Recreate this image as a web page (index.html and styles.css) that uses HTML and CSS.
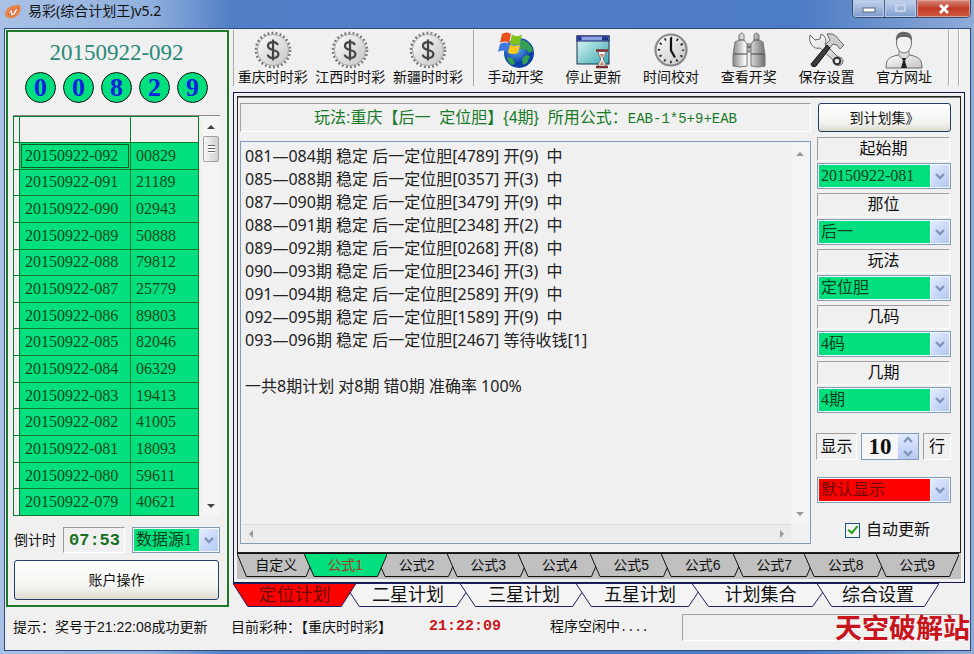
FILE: index.html
```html
<!DOCTYPE html>
<html lang="zh-CN">
<head>
<meta charset="utf-8">
<title>易彩(综合计划王)v5.2</title>
<link rel="stylesheet" href="styles.css">
</head>
<body>
<svg class="defs" aria-hidden="true">
  <defs>
    <linearGradient id="metal" x1="0" y1="0" x2="1" y2="1"><stop offset="0" stop-color="#fdfdfd"/><stop offset="1" stop-color="#c4c4c4"/></linearGradient>
    <linearGradient id="barrel"><stop offset="0" stop-color="#888"/><stop offset=".4" stop-color="#fff"/><stop offset="1" stop-color="#707070"/></linearGradient>
    <linearGradient id="pane" x1="0" y1="0" x2="1" y2="1"><stop offset="0" stop-color="#e4fafa"/><stop offset="1" stop-color="#39a9ae"/></linearGradient>
    <radialGradient id="globe" cx=".4" cy=".35"><stop offset="0" stop-color="#6db8f5"/><stop offset="1" stop-color="#0a3fa8"/></radialGradient>
    <symbol id="coin" viewBox="0 0 38 38">
      <circle cx="19" cy="19" r="17" fill="none" stroke="#777" stroke-width="2.600" stroke-dasharray="1.900 2.208"/>
      <circle cx="19" cy="19" r="15.600" fill="url(#metal)" stroke="#aaa"/>
      <path d="M24 14c-1-2-3-2.800-5-2.800-3 0-5 1.400-5 3.800 0 5.400 10.400 2.600 10.400 8 0 2.600-2.400 4-5.400 4-2.600 0-4.600-1-5.400-3.400M19 8.500v21" fill="none" stroke="#444" stroke-width="2.200"/>
    </symbol>
    <symbol id="chev" viewBox="0 0 10 8"><path d="M1 2l4 4 4-4" fill="none" stroke="#8094b8" stroke-width="2.400"/></symbol>
    <symbol id="tri" viewBox="0 0 8 4"><path d="M0 4l4-4 4 4z"/></symbol>
    <symbol id="tri-left" viewBox="0 0 4 8"><path d="M4 0L0 4l4 4z"/></symbol>
    <symbol id="tab" viewBox="0 0 100 24" preserveAspectRatio="none"><path d="M0 .5h100L88 23.500H12z" vector-effect="non-scaling-stroke"/></symbol>
  </defs>
</svg>

<header class="titlebar">
  <svg class="logo" viewBox="0 0 18 16"><path d="M1 10C1 5 7 1 12 1c5-1 6 3 4 7-2 5-7 7-11 6-2 0-4-2-4-4z" fill="#e8874a"/><path d="M4 11c1-4 3-6 5-6-1 2-1 3 0 4 1-3 3-5 5-5-1 5-4 8-7 8-1 0-1-1 0-3z" fill="#fff0dc" stroke="#c8502a" stroke-width=".8"/></svg>
  <h1>易彩(综合计划王)v5.2</h1>
  <div class="winbtns">
    <button class="wb" aria-label="最小化"><svg viewBox="0 0 14 10"><rect x="1" y="4" width="12" height="4" fill="#fff" stroke="#567"/></svg></button>
    <button class="wb" aria-label="最大化"><svg viewBox="0 0 14 10"><rect x="2" y="1" width="9" height="6" fill="none" stroke="#c4d3ea" stroke-width="2"/></svg></button>
    <button class="wb close" aria-label="关闭"><svg viewBox="0 0 14 10"><path d="M3 1l8 8M11 1L3 9" stroke="#fff" stroke-width="2.800"/></svg></button>
  </div>
</header>

<main class="client">
  <div class="work">
    <section class="side">
      <h2 class="issue">20150922-092</h2>
      <div class="balls"><span>0</span><span>0</span><span>8</span><span>2</span><span>9</span></div>
      <div class="history">
        <table>
          <thead><tr><th class="fix"></th><th class="no"></th><th></th></tr></thead>
          <tbody>
            <tr><td class="fix"></td><td class="cur">20150922-092</td><td>00829</td></tr>
            <tr><td class="fix"></td><td>20150922-091</td><td>21189</td></tr>
            <tr><td class="fix"></td><td>20150922-090</td><td>02943</td></tr>
            <tr><td class="fix"></td><td>20150922-089</td><td>50888</td></tr>
            <tr><td class="fix"></td><td>20150922-088</td><td>79812</td></tr>
            <tr><td class="fix"></td><td>20150922-087</td><td>25779</td></tr>
            <tr><td class="fix"></td><td>20150922-086</td><td>89803</td></tr>
            <tr><td class="fix"></td><td>20150922-085</td><td>82046</td></tr>
            <tr><td class="fix"></td><td>20150922-084</td><td>06329</td></tr>
            <tr><td class="fix"></td><td>20150922-083</td><td>19413</td></tr>
            <tr><td class="fix"></td><td>20150922-082</td><td>41005</td></tr>
            <tr><td class="fix"></td><td>20150922-081</td><td>18093</td></tr>
            <tr><td class="fix"></td><td>20150922-080</td><td>59611</td></tr>
            <tr><td class="fix"></td><td>20150922-079</td><td>40621</td></tr>
          </tbody>
        </table>
        <div class="vbar">
          <svg class="arrow"><use href="#tri"/></svg>
          <span class="thumb"></span>
          <svg class="arrow down"><use href="#tri"/></svg>
        </div>
      </div>
      <div class="source">
        <span>倒计时</span>
        <output class="count">07:53</output>
        <div class="combo"><select aria-label="数据源"><option>数据源1</option></select><span class="drop"><svg><use href="#chev"/></svg></span></div>
      </div>
      <button class="account push">账户操作</button>
    </section>

    <section class="right">
      <nav class="toolbar">
        <div class="group g3">
          <button><svg viewBox="0 0 38 38"><use href="#coin"/></svg>重庆时时彩</button>
          <button><svg viewBox="0 0 38 38"><use href="#coin"/></svg>江西时时彩</button>
          <button><svg viewBox="0 0 38 38"><use href="#coin"/></svg>新疆时时彩</button>
        </div>
        <div class="group g6">
          <button><svg viewBox="0 0 38 38">
            <circle cx="22" cy="22" r="15" fill="url(#globe)"/>
            <path d="M25 9c6 1 10 6 11 11l-4 2-3-4-5 1-1-5zM29 24l4 1-3 7-4 2-1-6zM10 26l6 2 2 5-3 1c-3-2-5-5-5-8z" fill="#32a04c"/>
            <path d="M5 3c3-2 6-2 9 0l-2 9c-3-2-6-2-9 0z" fill="#e8501c"/>
            <path d="M15 3.500c3 2 6 2 10 0l-2 9c-4 2-7 2-10 0z" fill="#7fc31c"/>
            <path d="M3 13c3-2 6-2 9 0l-2 8c-3-2-6-2-9 0z" fill="#3c78e0"/>
            <path d="M13 13.500c3 2 6 2 10 0l-2 8c-4 2-7 2-10 0z" fill="#fbc81e"/>
          </svg>手动开奖</button>
          <button><svg viewBox="0 0 38 38">
            <rect x="3" y="5" width="32" height="28" fill="url(#pane)" stroke="#16304a"/>
            <rect x="3" y="5" width="32" height="5" fill="#8c9fe0" stroke="#16226a"/><rect x="3.500" y="5.500" width="4" height="4" fill="#22348c"/><rect x="28" y="5.500" width="6" height="4" fill="#22348c"/>
            <path d="M24 20h8c0 5-2.500 5-2.500 8s2.500 3 2.500 8h-8c0-5 2.500-5 2.500-8s-2.500-3-2.500-8z" fill="#eef6f6" stroke="#667"/>
            <path d="M25.500 34l2.500-4 2.500 4zM25.500 23h5l-2.500 4z" fill="#c8926a"/><path d="M22 19.500h12M22 36h12" stroke="#7e3030" stroke-width="2.600"/>
          </svg>停止更新</button>
          <button><svg viewBox="0 0 38 38">
            <circle cx="19" cy="19" r="15.500" fill="url(#metal)" stroke="#888" stroke-width="2.200"/>
            <circle cx="19" cy="19" r="12" fill="none" stroke="#222" stroke-width="2.400" stroke-dasharray="1.700 4.583" stroke-dashoffset=".85"/>
            <path d="M19 7v12.500l4 7" fill="none" stroke="#111" stroke-width="2.200"/>
          </svg>时间校对</button>
          <button><svg viewBox="0 0 38 38" stroke="#777">
            <path d="M15 13h8v8h-8z" fill="#aaa"/><path d="M9 4q3-4 5 0v5l3 4v22q-7 2-14 0V24L5 11l4-2zM29 4q-3-4-5 0v5l-3 4v22q7 2 14 0V24l-2-13-4-2z" fill="url(#barrel)"/>
            <path d="M4 23h13M21 23h13M9 9h5M24 9h5M17 16h4" stroke="#444"/>
          </svg>查看开奖</button>
          <button><svg viewBox="0 0 38 38">
            <path d="M3 4l5 5 5-1 1-5c5 2 6 7 4 10l13 13c5 0 6 4 4 7-3 3-9 1-9-4L13 17C7 19 1 12 3 4z" fill="url(#metal)" stroke="#666"/><circle cx="30" cy="30" r="3.300" fill="#eee" stroke="#333" stroke-width="2"/>
            <path d="M20 3c6-1 10 2 12 6l5 5-4 4-3-4-4-1-4 5-4-4 5-5z" fill="#ccc" stroke="#666"/><path d="M20 14l3 3L9 35q-4 2-5-2z" fill="#3c3c3c" stroke="#111"/>
          </svg>保存设置</button>
          <button><svg viewBox="0 0 38 38">
            <path d="M1 37c0-9 3-11 12-13h12c9 2 12 4 12 13z" fill="url(#metal)" stroke="#666"/>
            <path d="M14 19h10v6l-5 4-5-4z" fill="#ddd" stroke="#888"/>
            <ellipse cx="19" cy="12" rx="7.500" ry="10" fill="#f2f2f2" stroke="#777"/>
            <path d="M11 11c-1-7 3-11 9-10 5 0 8 4 7 10-2-5-4-5-8-5s-6 0-8 5z" fill="#666"/>
            <path d="M17 27h4l-1 3 2 7h-6l2-7z" fill="#222"/>
          </svg>官方网址</button>
        </div>
        <i class="rule"></i><i class="rule"></i>
      </nav>

      <div class="outer">
        <div class="inner">
          <div class="plan">
            <h3 class="sunken formula">玩法:重庆【后一 &nbsp;定位胆】{4期} &nbsp;所用公式：<span>EAB-1*5+9+EAB</span></h3>
            <div class="log">
              <textarea readonly aria-label="计划" wrap="off">081—084期 稳定 后一定位胆[4789] 开(9)  中
085—088期 稳定 后一定位胆[0357] 开(3)  中
087—090期 稳定 后一定位胆[3479] 开(9)  中
088—091期 稳定 后一定位胆[2348] 开(2)  中
089—092期 稳定 后一定位胆[0268] 开(8)  中
090—093期 稳定 后一定位胆[2346] 开(3)  中
091—094期 稳定 后一定位胆[2589] 开(9)  中
092—095期 稳定 后一定位胆[1589] 开(9)  中
093—096期 稳定 后一定位胆[2467] 等待收钱[1]

一共8期计划 对8期 错0期 准确率 100%</textarea>
              <div class="vbar soft"><svg class="arrow"><use href="#tri"/></svg><svg class="arrow down"><use href="#tri"/></svg></div>
              <div class="hbar"><svg class="arrow side-arrow"><use href="#tri-left"/></svg><svg class="arrow side-arrow flip"><use href="#tri-left"/></svg></div>
            </div>
          </div>
          <form class="options">
            <button type="button" class="push goto">到计划集》</button>
            <label class="sunken" for="o1">起始期</label>
            <div class="combo"><select id="o1"><option>20150922-081</option></select><span class="drop"><svg><use href="#chev"/></svg></span></div>
            <label class="sunken" for="o2">那位</label>
            <div class="combo"><select id="o2"><option>后一</option></select><span class="drop"><svg><use href="#chev"/></svg></span></div>
            <label class="sunken" for="o3">玩法</label>
            <div class="combo"><select id="o3"><option>定位胆</option></select><span class="drop"><svg><use href="#chev"/></svg></span></div>
            <label class="sunken" for="o4">几码</label>
            <div class="combo"><select id="o4"><option>4码</option></select><span class="drop"><svg><use href="#chev"/></svg></span></div>
            <label class="sunken" for="o5">几期</label>
            <div class="combo"><select id="o5"><option>4期</option></select><span class="drop"><svg><use href="#chev"/></svg></span></div>
            <div class="rows">
              <label class="sunken" for="o6">显示</label>
              <div class="spin"><input id="o6" value="10"><span class="steps"><svg class="up"><use href="#chev"/></svg><svg><use href="#chev"/></svg></span></div>
              <span class="sunken">行</span>
            </div>
            <div class="combo red"><select aria-label="显示方式"><option>默认显示</option></select><span class="drop"><svg><use href="#chev"/></svg></span></div>
            <label class="auto"><input type="checkbox" checked>自动更新</label>
          </form>
        </div>
        <div class="tabs formulas">
          <button><svg><use href="#tab"/></svg><span>自定义</span></button>
          <button class="on"><svg><use href="#tab"/></svg><span>公式1</span></button>
          <button><svg><use href="#tab"/></svg><span>公式2</span></button>
          <button><svg><use href="#tab"/></svg><span>公式3</span></button>
          <button><svg><use href="#tab"/></svg><span>公式4</span></button>
          <button><svg><use href="#tab"/></svg><span>公式5</span></button>
          <button><svg><use href="#tab"/></svg><span>公式6</span></button>
          <button><svg><use href="#tab"/></svg><span>公式7</span></button>
          <button><svg><use href="#tab"/></svg><span>公式8</span></button>
          <button><svg><use href="#tab"/></svg><span>公式9</span></button>
        </div>
      </div>
      <div class="tabs plans">
        <button class="on"><svg><use href="#tab"/></svg><span>定位计划</span></button>
        <button><svg><use href="#tab"/></svg><span>二星计划</span></button>
        <button><svg><use href="#tab"/></svg><span>三星计划</span></button>
        <button><svg><use href="#tab"/></svg><span>五星计划</span></button>
        <button><svg><use href="#tab"/></svg><span>计划集合</span></button>
        <button><svg><use href="#tab"/></svg><span>综合设置</span></button>
      </div>
    </section>
  </div>

  <footer class="status">
    <span class="tip">提示：奖号于21:22:08成功更新</span>
    <span class="kind">目前彩种：【重庆时时彩】</span>
    <time>21:22:09</time>
    <span class="idle">程序空闲中<span class="dots">....</span></span>
    <div class="sunken bar"></div>
    <strong class="mark">天空破解站</strong>
  </footer>
</main>
</body>
</html>
```
FILE: styles.css
```css
* { box-sizing: border-box; }
html, body { height: 100%; margin: 0; }
body {
  display: flex;
  flex-direction: column;
  font: 14px/16px "Liberation Sans", "Noto Sans CJK SC", sans-serif;
  color: #111;
  background: linear-gradient(90deg, #a9c1e6 0, #8fb0de 150px, #527fc6 230px, #4c7cc4 800px, #8fabd8 100%);
}
h1, h2, h3 { margin: 0; font-weight: normal; }
button, select, input, textarea { font: inherit; color: inherit; margin: 0; border-radius: 0; }
.defs { position: absolute; width: 0; height: 0; }

.titlebar { display: flex; height: 28px; flex: none; padding: 0 3px 0 4px; }
.logo { width: 18px; height: 16px; margin-top: 4px; }
.titlebar h1 { flex: 1; margin: 2px 0 0 6px; font: 14px/18px "Noto Sans", "Noto Sans CJK SC", sans-serif; }
.winbtns { display: flex; height: 18px; border: 1px solid #34476c; border-top: 0; border-radius: 0 0 5px 5px; overflow: hidden; }
.wb { width: 32px; padding: 0; border: 0; border-right: 1px solid #4e6690; background: linear-gradient(#c5d4ec, #7e9cce); box-shadow: inset 0 0 0 1px #b9cae8; }
.wb svg { width: 14px; height: 10px; display: block; margin: 0 auto; }
.wb.close { width: 53px; border: 0; background: linear-gradient(#d98a7c, #c23c28 50%, #cf5a40); box-shadow: inset 0 0 0 1px #e0a090; }

.client { flex: 1; min-height: 0; display: flex; flex-direction: column; margin: 0 3px 3px 4px; border: 1px solid #2e4a7c; background: #f0f0f0; }
.work { flex: 1; min-height: 0; display: flex; gap: 4px; padding: 1px 2px 0 1px; }

.side { flex: 0 0 223px; display: flex; flex-direction: column; padding: 9px 7px 5px 5px; border: 2px solid #1c7a28; }
.issue { text-align: center; color: #2a8a78; font: 23px/24px "Liberation Serif", serif; }
.balls { display: flex; justify-content: center; gap: 7px; margin: 7px 0 12px; }
.balls span { width: 31px; height: 31px; border: 1px solid #111; border-radius: 50%; background: #02df7f; color: #0a22e0; font: bold 26px/29px "Liberation Serif", serif; text-align: center; }
.history { flex: 1; min-height: 0; display: flex; border-top: 1px solid #888; gap: 3px; }
table { flex: 1; height: 100%; border-collapse: collapse; table-layout: fixed; font: 16px/18px "Liberation Serif", serif; color: #0d4a16; }
th, td { height: 26px; border: 1px solid #0c7a2c; padding: 0 0 0 5px; }
td { background: #02df7f; }
th { background: #f0f0f0; }
.fix { width: 6px; padding: 0; background: #f0f0f0; }
.no { width: 111px; }
.cur { box-shadow: inset 0 0 0 1px #02df7f, inset 0 0 0 2px #0b5a1c; }
.vbar { width: 18px; display: flex; flex-direction: column; align-items: center; padding: 9px 0 8px; background: #f4f4f4; }
.arrow { width: 8px; height: 4px; fill: #444; flex: none; }
.arrow.down { transform: rotate(180deg); margin-top: auto; }
.thumb { width: 16px; height: 26px; margin-top: 7px; border: 1px solid #a0a0a0; border-radius: 2px; background: repeating-linear-gradient(#666 0 1px, #fff 1px 3px) center / 7px 8px no-repeat, linear-gradient(90deg, #f6f6f6, #d0d0d0); }
.source { display: flex; align-items: center; gap: 7px; margin: 11px 0 7px 1px; }
.count { flex: 1; padding: 0 0 0 5px; height: 26px; border: 1px solid; border-color: #999 #fff #fff #999; color: #157024; font: bold 17px/26px "Liberation Mono", monospace; }
.source .combo { width: 88px; }
.push { border: 1px solid #223f66; border-radius: 3px; background: linear-gradient(#fff, #f3f3ee 70%, #dcd9ce); padding: 0; }
.account { height: 40px; margin: 0 1px 0 1px; }

.combo { display: grid; border: 1px solid #7f9db9; background: #f4f8f4; padding: 1px; height: 26px; }
.combo > * { grid-area: 1 / 1; }
.combo select { appearance: none; width: 100%; height: 100%; border: 0; padding: 0 20px 0 2px; outline: 0; background: #02df7f; color: #10401c; font: 16px/22px "Liberation Serif", "Noto Sans CJK SC", serif; }
.combo.red select { background: #f00; color: #6c0c08; }
.drop { justify-self: end; width: 19px; display: grid; place-items: center; pointer-events: none; border-left: 1px solid #f4f8f4; background: linear-gradient(135deg, #e3ebff, #b4c8f2); }
.drop svg, .steps svg { width: 10px; height: 8px; }

.right { flex: 1; min-width: 0; display: flex; flex-direction: column; }
.toolbar { display: flex; margin-bottom: 6px; height: 56px; }
.group { display: flex; border-left: 1px solid #a8a8a8; }
.g3 { flex: 237; padding-right: 6px; }
.g6 { flex: 475; padding: 0 5px 0 3px; }
.toolbar button { flex: 1 1 0; min-width: 0; padding: 0; border: 0; background: none; white-space: nowrap; display: flex; flex-direction: column; align-items: center; line-height: 17px; }
.toolbar button svg { width: 38px; height: 38px; margin: 1px 0 0; flex: none; }
.rule { width: 2px; margin-right: 8px; border-left: 1px solid #aaa; border-right: 1px solid #fff; }

.outer { flex: 1; min-height: 0; display: flex; flex-direction: column; margin-right: 3px; padding: 3px; border: 1px solid #141450; }
.inner { flex: 1; min-height: 0; display: flex; gap: 6px; padding: 6px 9px 8px 2px; border: 1px solid #222; box-shadow: inset 0 1px #777; }
.plan { flex: 1; min-width: 0; display: flex; flex-direction: column; gap: 9px; }
.sunken { border: 1px solid; border-color: #a0a0a0 #fff #fff #a0a0a0; text-align: center; }
.formula { color: #187a28; font-size: 16px; line-height: 27px; white-space: nowrap; }
.formula span { font: 14px/20px "Liberation Mono", monospace; }
.log { flex: 1; min-height: 0; display: grid; grid-template: 1fr 18px / 1fr 18px; border: 1px solid #7f9db9; padding: 1px; }
textarea { resize: none; border: 0; outline: 0; padding: 2px 3px; background: #f0f0f0; overflow: hidden; white-space: pre; font: 16px/23px "Noto Sans", "Noto Sans CJK SC", sans-serif; color: #222; }
.soft .arrow, .hbar .arrow { fill: #999; }
.hbar { display: flex; align-items: center; justify-content: space-between; padding: 0 7px; background: #ececec; border-top: 1px solid #ddd; }
.side-arrow { width: 4px; height: 8px; }
.flip { transform: rotate(180deg); }

.options { flex: 0 0 133px; display: flex; flex-direction: column; font-size: 16px; }
.options > label.sunken { height: 24px; line-height: 22px; margin: 0 1px 2px 0; }
.options .combo { margin-bottom: 4px; }
.goto { height: 29px; margin: 0 0 5px 1px; font-size: 14px; }
.rows { display: flex; gap: 4px; margin: 16px 0 17px -1px; }
.rows > * { height: 27px; line-height: 25px; flex: none; }
.rows label { width: 41px; }
.rows > span { width: 28px; }
.spin { display: flex; width: 58px; border: 1px solid #7f9db9; }
.spin input { flex: 1; min-width: 0; border: 0; padding: 0; outline: 0; text-align: center; background: #f6f6f6; font: bold 23px/24px "Liberation Serif", serif; }
.steps { width: 20px; display: grid; place-items: center; background: linear-gradient(#e0e9ff, #b8caf4); }
.steps .up { transform: rotate(180deg); }
.auto { display: flex; align-items: center; gap: 6px; margin: 14px 0 0 28px; line-height: 18px; white-space: nowrap; }
.auto input { appearance: none; width: 15px; height: 15px; display: grid; place-items: center; border: 1px solid #1c5180; background: #f4f4f0; }
.auto input:checked::after { content: ""; width: 4px; height: 8px; border: solid #21a121; border-width: 0 2px 2px 0; transform: rotate(40deg) translate(-1px, -1px); }

.tabs { display: grid; }
.tabs button { position: relative; height: 24px; margin-right: -12px; padding: 0; border: 0; background: none; white-space: nowrap; }
.tabs svg { position: absolute; inset: 0; width: 100%; height: 100%; stroke: #111; fill: #c0c0c0; }
.tabs span { position: relative; }
.tabs .on { z-index: 1; }
.formulas { grid-template-columns: 67fr repeat(9, 72fr); padding: 0 14px 2px 0; background: #c0c0c0; }
.formulas .on { color: #a83a20; }
.formulas .on svg { fill: #02df7f; }
.plans { grid-template-columns: 111fr 116fr 116fr 116fr 125fr 110fr; padding-right: 41px; font-size: 18px; }
.plans svg { stroke: #20205c; fill: #f4f4f4; }
.plans .on { color: #6c0c08; }
.plans .on svg { fill: #f00; }

.status { position: relative; display: flex; align-items: center; height: 43px; padding: 0 8px 3px; white-space: nowrap; }
.tip { flex: 0 0 218px; }
.kind { flex: 0 0 198px; }
.status time { flex: 0 0 121px; color: #c81820; font: bold 15px/18px "Liberation Mono", monospace; }
.idle { flex: 0 0 132px; }
.dots { font-family: "Liberation Mono", monospace; font-size: 12px; }
.bar { flex: 1; height: 27px; }
.mark { position: absolute; right: 0; top: 3px; color: #c8141c; font: bold 27px/34px "Noto Sans CJK SC", sans-serif; }
```
